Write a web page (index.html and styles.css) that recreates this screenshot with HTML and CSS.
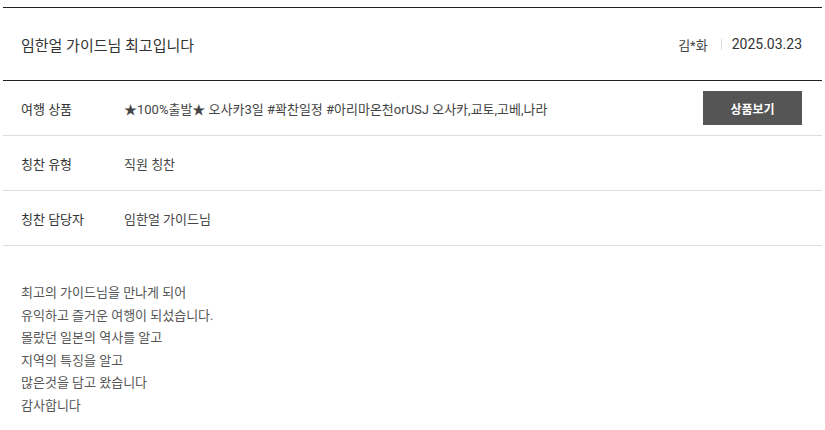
FILE: index.html
```html
<!DOCTYPE html>
<html lang="ko">
<head>
    <meta charset="UTF-8">
    <meta name="viewport" content="width=device-width, initial-scale=1.0">
    <title>칭찬 상세</title>
    <link rel="stylesheet" href="styles.css">
</head>
<body>

    <div class="view">
        <div class="view-head">
            <h2 class="view-title">임한얼 가이드님 최고입니다</h2>
            <div class="view-meta">
                <span class="writer">김*화</span>
                <span class="bar"></span>
                <span class="date">2025.03.23</span>
            </div>
        </div>

        <div class="info-row">
            <div class="info-label">여행 상품</div>
            <div class="info-value">★100%출발★ 오사카3일 #꽉찬일정 #아리마온천orUSJ 오사카,교토,고베,나라</div>
            <button type="button" class="btn-goods">상품보기</button>
        </div>
        <div class="info-row">
            <div class="info-label">칭찬 유형</div>
            <div class="info-value">직원 칭찬</div>
        </div>
        <div class="info-row">
            <div class="info-label">칭찬 담당자</div>
            <div class="info-value">임한얼 가이드님</div>
        </div>

        <div class="view-content">
            최고의 가이드님을 만나게 되어<br>
            유익하고 즐거운 여행이 되섰습니다.<br>
            몰랐던 일본의 역사를 알고<br>
            지역의 특징을 알고<br>
            많은것을 담고 왔습니다<br>
            감사합니다
        </div>
    </div>

</body>
</html>
```

FILE: styles.css
```css
body {
    margin: 0;
    padding: 7px 3px 0;
    font-family: Roboto, "Noto Sans CJK KR", sans-serif;
    color: #333;
    background-color: #fff;
}
.view {
    border-top: 1px solid #222;
}
.view-head {
    display: flex;
    align-items: center;
    justify-content: space-between;
    height: 72px;
    padding: 0 20px 0 18px;
    border-bottom: 1px solid #222;
}
.view-title {
    margin: 0;
    font-size: 15px;
    font-weight: 400;
    color: #333;
}
.view-meta {
    display: flex;
    align-items: center;
    font-size: 13px;
    color: #444;
}
.bar {
    width: 1px;
    height: 11px;
    margin: 0 10px 0 13px;
    background-color: #ddd;
}
.date {
    font-size: 14px;
    color: #333;
}
.info-row {
    display: flex;
    align-items: center;
    height: 54px;
    padding: 0 20px 0 18px;
    border-bottom: 1px solid #ddd;
    font-size: 13px;
}
.info-label {
    width: 103px;
    color: #333;
}
.info-value {
    flex: 1;
    color: #444;
}
.btn-goods {
    width: 99px;
    height: 34px;
    border: none;
    background-color: #555;
    color: #fff;
    font-family: inherit;
    font-size: 12px;
    font-weight: 700;
    cursor: pointer;
}
.view-content {
    padding: 36px 18px 0;
    font-size: 13px;
    line-height: 22.6px;
    color: #555;
}
```
